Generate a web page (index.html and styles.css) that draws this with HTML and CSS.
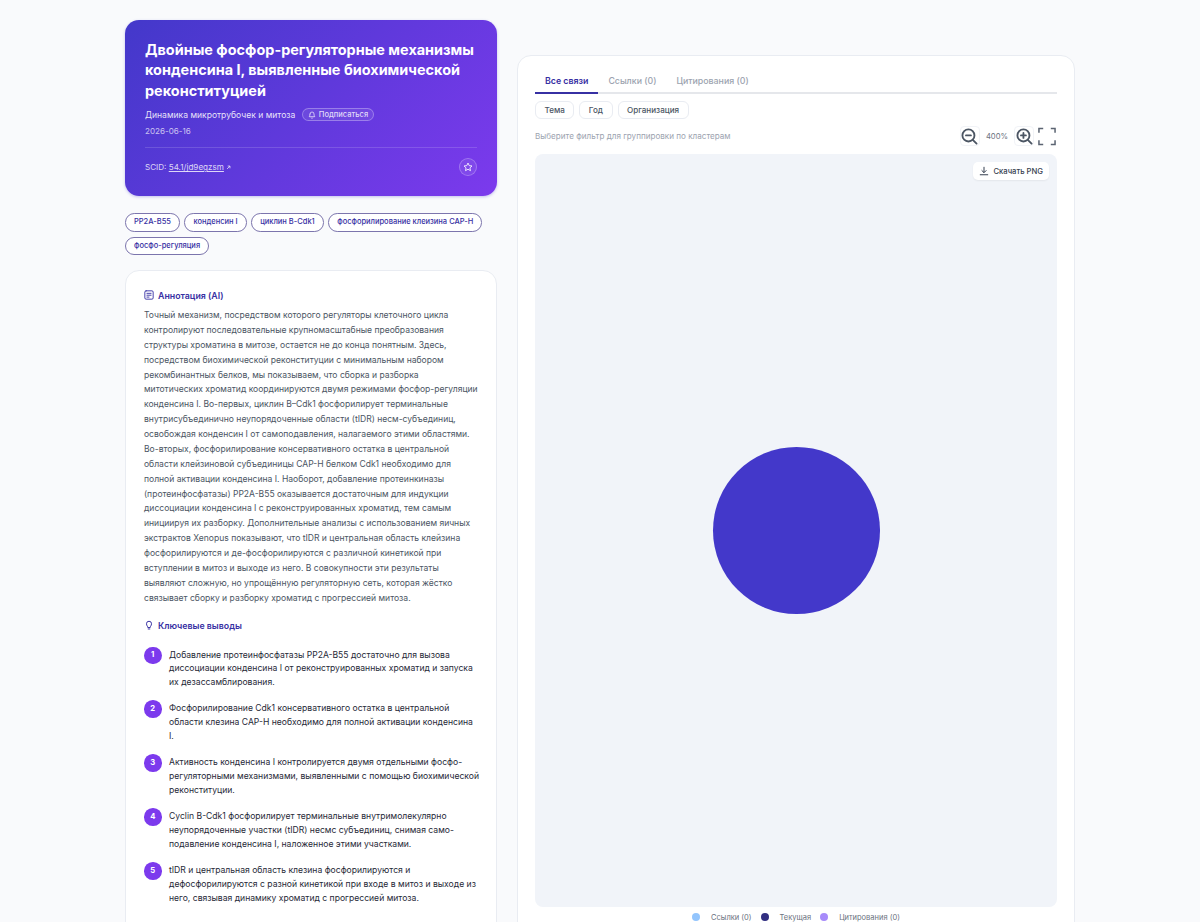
FILE: index.html
```html
<!DOCTYPE html>
<html lang="ru">
<head>
    <meta charset="UTF-8">
    <meta name="viewport" content="width=device-width, initial-scale=1.0">
    <title>Двойные фосфор-регуляторные механизмы конденсина I</title>
    <link rel="stylesheet" href="styles.css">
</head>
<body>
    <div class="page">
        <!-- Left column -->
        <div class="left-col">
            <div class="hero">
                <h1>Двойные фосфор-регуляторные механизмы конденсина I, выявленные биохимической реконституцией</h1>
                <div class="hero-topic">
                    <span>Динамика микротрубочек и митоза</span>
                    <button class="subscribe">
                        <svg width="8" height="8" viewBox="0 0 24 24" fill="none" stroke="currentColor" stroke-width="2.400" stroke-linecap="round" stroke-linejoin="round"><path d="M6 9a6 6 0 0 1 12 0c0 6 2.500 8 2.500 8h-17S6 15 6 9"/><path d="M10 21a2.200 2.200 0 0 0 4 0"/></svg>
                        Подписаться
                    </button>
                </div>
                <div class="hero-date">2026-06-16</div>
                <div class="hero-footer">
                    <div class="scid">SCID: <a href="#">54.1/jd9egzsm</a>
                        <svg width="5" height="5" viewBox="0 0 24 24" fill="none" stroke="currentColor" stroke-width="4"><path d="M5 19 18 6"/><path d="M8 5h11v11"/></svg>
                    </div>
                    <button class="star-btn">
                        <svg width="10" height="10" viewBox="0 0 24 24" fill="none" stroke="currentColor" stroke-width="2.200" stroke-linejoin="round"><path d="M12 2.500l2.900 6.200 6.700.8-5 4.600 1.400 6.700-6-3.400-6 3.400 1.400-6.700-5-4.600 6.700-.8z"/></svg>
                    </button>
                </div>
            </div>

            <div class="tags">
                <a class="tag" href="#">PP2A-B55</a>
                <a class="tag" href="#">конденсин I</a>
                <a class="tag" href="#">циклин B-Cdk1</a>
                <a class="tag" href="#">фосфорилирование клеизина CAP-H</a>
                <a class="tag" href="#">фосфо-регуляция</a>
            </div>

            <div class="card abstract">
                <div class="section-title">
                    <svg width="10" height="10" viewBox="0 0 24 24" fill="none" stroke="currentColor" stroke-width="2.200" stroke-linecap="round"><rect x="2" y="2" width="20" height="20" rx="3"/><path d="M7 8h10M7 12.500h10M7 17h5"/></svg>
                    Аннотация (AI)
                </div>
                <p class="abstract-text">Точный механизм, посредством которого регуляторы клеточного цикла контролируют последовательные крупномасштабные преобразования структуры хроматина в митозе, остается не до конца понятным. Здесь, посредством биохимической реконституции с минимальным набором рекомбинантных белков, мы показываем, что сборка и разборка митотических хроматид координируются двумя режимами фосфор-регуляции конденсина I. Во-первых, циклин B–Cdk1 фосфорилирует терминальные внутрисубъединично неупорядоченные области (tIDR) несм-субъединиц, освобождая конденсин I от самоподавления, налагаемого этими областями. Во-вторых, фосфорилирование консервативного остатка в центральной области клейзиновой субъединицы CAP-H белком Cdk1 необходимо для полной активации конденсина I. Наоборот, добавление протеинкиназы (протеинфосфатазы) PP2A-B55 оказывается достаточным для индукции диссоциации конденсина I с реконструированных хроматид, тем самым инициируя их разборку. Дополнительные анализы с использованием яичных экстрактов Xenopus показывают, что tIDR и центральная область клейзина фосфорилируются и де-фосфорилируются с различной кинетикой при вступлении в митоз и выходе из него. В совокупности эти результаты выявляют сложную, но упрощённую регуляторную сеть, которая жёстко связывает сборку и разборку хроматид с прогрессией митоза.</p>

                <div class="section-title findings-title">
                    <svg width="10" height="10" viewBox="0 0 24 24" fill="none" stroke="currentColor" stroke-width="2.400" stroke-linecap="round" stroke-linejoin="round"><path d="M9 17c0-2-3-3.500-3-8a6 6 0 0 1 12 0c0 4.500-3 6-3 8z"/><path d="M10 21.500h4"/></svg>
                    Ключевые выводы
                </div>
                <ol class="findings">
                    <li><span class="num">1</span><span class="finding-text">Добавление протеинфосфатазы PP2A-B55 достаточно для вызова диссоциации конденсина I от реконструированных хроматид и запуска их дезассамблирования.</span></li>
                    <li><span class="num">2</span><span class="finding-text">Фосфорилирование Cdk1 консервативного остатка в центральной области клезина CAP-H необходимо для полной активации конденсина I.</span></li>
                    <li><span class="num">3</span><span class="finding-text">Активность конденсина I контролируется двумя отдельными фосфо-регуляторными механизмами, выявленными с помощью биохимической реконституции.</span></li>
                    <li><span class="num">4</span><span class="finding-text">Cyclin B-Cdk1 фосфорилирует терминальные внутримолекулярно неупорядоченные участки (tIDR) несмс субъединиц, снимая само-подавление конденсина I, наложенное этими участками.</span></li>
                    <li><span class="num">5</span><span class="finding-text">tIDR и центральная область клезина фосфорилируются и дефосфорилируются с разной кинетикой при входе в митоз и выходе из него, связывая динамику хроматид с прогрессией митоза.</span></li>
                </ol>
            </div>
        </div>

        <!-- Graph panel -->
        <div class="right-col">
            <div class="card graph-card">
                <div class="tabs">
                    <a class="tab active" href="#">Все связи</a>
                    <a class="tab" href="#">Ссылки (0)</a>
                    <a class="tab" href="#">Цитирования (0)</a>
                </div>
                <div class="filters">
                    <button class="filter">Тема</button>
                    <button class="filter">Год</button>
                    <button class="filter">Организация</button>
                </div>
                <div class="graph-toolbar">
                    <span class="hint">Выберите фильтр для группировки по кластерам</span>
                    <div class="zoom-controls">
                        <button class="icon-btn">
                            <svg width="17" height="17" viewBox="0 0 24 24" fill="none" stroke="#4b5563" stroke-width="2.600" stroke-linecap="round"><circle cx="10.500" cy="10.500" r="8.500"/><path d="M7 10.500h7M17 17l5 5"/></svg>
                        </button>
                        <span class="zoom-value">400%</span>
                        <button class="icon-btn">
                            <svg width="17" height="17" viewBox="0 0 24 24" fill="none" stroke="#4b5563" stroke-width="2.600" stroke-linecap="round"><circle cx="10.500" cy="10.500" r="8.500"/><path d="M7 10.500h7M10.500 7v7M17 17l5 5"/></svg>
                        </button>
                        <button class="icon-btn fullscreen">
                            <svg width="19" height="19" viewBox="0 0 19 19" fill="none" stroke="#5b6472" stroke-width="1.600"><path d="M1 5.500V1h4.500M13.500 1H18v4.500M18 13.500V18h-4.500M5.500 18H1v-4.500"/></svg>
                        </button>
                    </div>
                </div>
                <div class="graph-area">
                    <button class="download">
                        <svg width="10" height="10" viewBox="0 0 24 24" fill="none" stroke="currentColor" stroke-width="2.400" stroke-linecap="round" stroke-linejoin="round"><path d="M12 3v12M7 11l5 5 5-5M3 21h18"/></svg>
                        Скачать PNG
                    </button>
                    <div class="node"></div>
                </div>
                <div class="legend">
                    <span class="dot dot-refs"></span><span class="legend-label">Ссылки (0)</span>
                    <span class="dot dot-current"></span><span class="legend-label">Текущая</span>
                    <span class="dot dot-cites"></span><span class="legend-label">Цитирования (0)</span>
                </div>
            </div>
        </div>
    </div>
</body>
</html>
```

FILE: styles.css
```css
* {
    box-sizing: border-box;
}

html, body {
    height: 100%;
    overflow: hidden;
}

body {
    margin: 0;
    font-family: 'Inter', 'Liberation Sans', sans-serif;
    background-color: #f9fafc;
    color: #374151;
}

button {
    font-family: inherit;
    cursor: pointer;
}

a {
    color: inherit;
    text-decoration: none;
}

.page {
    display: flex;
    gap: 20px;
    padding: 20px 125px 0;
}

.left-col {
    width: 372px;
    flex-shrink: 0;
}

.right-col {
    flex: 1;
    padding-top: 35px;
}

.hero {
    height: 175.500px;
    padding: 20px 20px 0;
    border-radius: 14px;
    color: #fff;
    background: linear-gradient(135deg, #4338ca 0%, #7c3aed 100%);
    box-shadow: 0 1px 3px rgba(67, 56, 202, 0.3);
}

.hero h1 {
    margin: 0 0 7px;
    font-size: 14.450px;
    line-height: 20.400px;
    font-weight: 700;
}

.hero-topic {
    display: flex;
    align-items: center;
    gap: 6.500px;
    font-size: 8.550px;
    color: rgba(255, 255, 255, 0.88);
}

.subscribe {
    display: flex;
    align-items: center;
    gap: 3px;
    height: 13px;
    padding: 0 5px;
    font-size: 7.550px;
    font-weight: 500;
    color: rgba(255, 255, 255, 0.8);
    background: rgba(255, 255, 255, 0.08);
    border: 1px solid rgba(255, 255, 255, 0.3);
    border-radius: 7px;
}

.hero-date {
    margin-top: 5px;
    font-size: 8.100px;
    line-height: 10px;
    color: rgba(255, 255, 255, 0.7);
}

.hero-footer {
    display: flex;
    align-items: center;
    justify-content: space-between;
    margin-top: 11px;
    padding-top: 10px;
    border-top: 1px solid rgba(255, 255, 255, 0.15);
}

.scid {
    font-size: 8.100px;
    color: rgba(255, 255, 255, 0.8);
}

.scid a {
    text-decoration: underline;
}

.star-btn {
    display: flex;
    align-items: center;
    justify-content: center;
    width: 18px;
    height: 18px;
    padding: 0;
    color: rgba(255, 255, 255, 0.9);
    background: rgba(255, 255, 255, 0.08);
    border: 1px solid rgba(255, 255, 255, 0.25);
    border-radius: 50%;
}

.tags {
    display: flex;
    flex-wrap: wrap;
    gap: 5px 4.500px;
    margin-top: 17.500px;
}

.tag {
    display: block;
    height: 18.500px;
    padding: 0 8px;
    font-size: 7.500px;
    font-weight: 500;
    line-height: 16.500px;
    color: #3730a3;
    background: #fff;
    border: 1px solid #7c75ad;
    border-radius: 9.250px;
}

.card {
    background: #fff;
    border: 1px solid #e9ecf2;
    border-radius: 14px;
}

.abstract {
    margin-top: 15px;
    padding: 18.500px 18px 20px;
}

.section-title {
    display: flex;
    align-items: center;
    gap: 4px;
    font-size: 8.800px;
    font-weight: 600;
    line-height: 11px;
    color: #3730a3;
}

.abstract-text {
    margin: 7.500px 0 0;
    font-size: 8.550px;
    line-height: 14.880px;
    color: #4b5563;
}

.findings-title {
    margin-top: 14px;
}

.findings {
    margin: 16px -2px 0 0;
    padding: 0;
    list-style: none;
}

.findings li {
    display: flex;
    gap: 7.500px;
    margin-bottom: 11.200px;
    font-size: 8.600px;
    line-height: 13.600px;
    color: #1f2937;
}

.finding-text {
    padding-top: 2px;
}

.num {
    display: flex;
    align-items: center;
    justify-content: center;
    flex-shrink: 0;
    width: 17.500px;
    height: 17.500px;
    font-size: 7.650px;
    font-weight: 700;
    color: #fff;
    background: #7c3aed;
    border-radius: 50%;
}

.graph-card {
    height: 900px;
    padding: 18px 17px 0;
}

.tabs {
    display: flex;
    border-bottom: 2px solid #e5e7eb;
}

.tab {
    padding: 0 10px 4px;
    margin-bottom: -2px;
    font-size: 8.800px;
    font-weight: 500;
    line-height: 14px;
    color: #9ca3af;
    border-bottom: 2px solid transparent;
}

.tab.active {
    font-weight: 600;
    color: #3730a3;
    border-bottom-color: #3730a3;
}

.filters {
    display: flex;
    gap: 5px;
    margin-top: 7px;
}

.filter {
    height: 18px;
    padding: 0 8.500px;
    font-size: 8.100px;
    font-weight: 500;
    color: #4b5563;
    background: #fff;
    border: 1px solid #e9ecf2;
    border-radius: 6px;
}

.graph-toolbar {
    display: flex;
    align-items: center;
    justify-content: space-between;
    margin-top: 7px;
}

.hint {
    font-size: 8.100px;
    color: #9ca3af;
}

.zoom-controls {
    display: flex;
    align-items: center;
}

.icon-btn {
    display: flex;
    align-items: center;
    justify-content: center;
    width: 20px;
    height: 20px;
    padding: 0;
    background: #fff;
    border: 1px solid #f1f3f7;
    border-radius: 4px;
}

.icon-btn.fullscreen {
    margin-left: 3px;
    border-color: transparent;
}

.zoom-value {
    margin: 0 6px;
    font-size: 7.650px;
    color: #6b7280;
}

.graph-area {
    position: relative;
    display: flex;
    align-items: center;
    justify-content: center;
    height: 753px;
    margin-top: 8px;
    background: #f1f4f9;
    border-radius: 8px;
}

.download {
    position: absolute;
    top: 8px;
    right: 8px;
    display: flex;
    align-items: center;
    gap: 4px;
    height: 18px;
    padding: 0 6px;
    font-size: 7.650px;
    font-weight: 500;
    color: #374151;
    background: #fff;
    border: none;
    border-radius: 5px;
    box-shadow: 0 1px 2px rgba(0, 0, 0, 0.06);
}

.node {
    width: 167px;
    height: 167px;
    background: #4338ca;
    border-radius: 50%;
}

.legend {
    display: flex;
    align-items: center;
    justify-content: center;
    height: 20px;
    font-size: 7.500px;
    color: #6b7280;
}

.dot {
    width: 8px;
    height: 8px;
    border-radius: 50%;
}

.dot-refs {
    background: #93c5fd;
}

.dot-current {
    background: #312e81;
}

.dot-cites {
    background: #a78bfa;
}

.legend-label {
    margin: 0 9px 0 11px;
}

.legend-label:last-child {
    margin-right: 0;
}
```
